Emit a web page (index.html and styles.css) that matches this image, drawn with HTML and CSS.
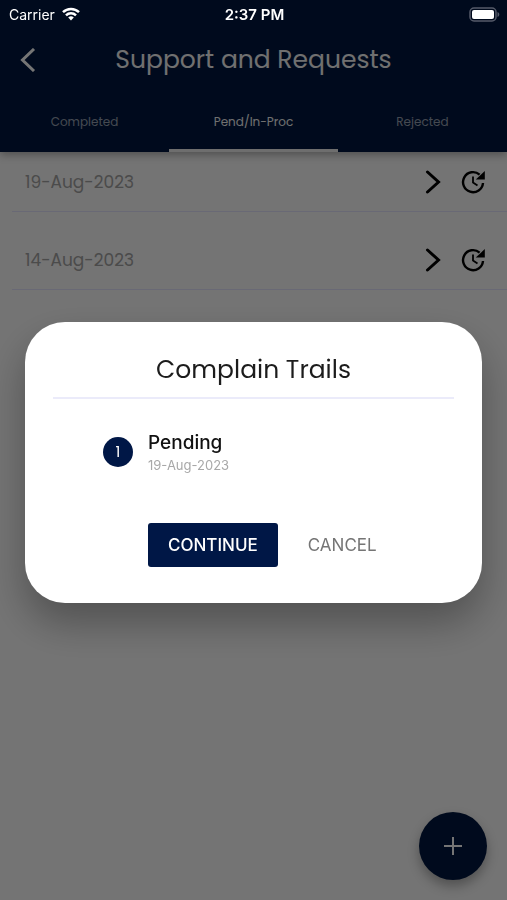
FILE: index.html
```html
<!DOCTYPE html>
<html lang="en">
<head>
    <meta charset="UTF-8">
    <meta name="viewport" content="width=device-width, initial-scale=1.0">
    <title>Support and Requests</title>
    <link rel="stylesheet" href="styles.css">
</head>
<body>
    <header class="app-header">
        <!-- Status bar -->
        <div class="status-bar">
            <div class="carrier">
                <span>Carrier</span>
                <svg width="18" height="14" viewBox="0 0 18 14" fill="none" stroke="#fff" stroke-width="2.5">
                    <path d="M1 5.2a11.4 11.4 0 0 1 16 0"/>
                    <path d="M4 8.4a7.1 7.1 0 0 1 10 0"/>
                    <path d="M9 13.4L6.2 10.6a4 4 0 0 1 5.6 0z" fill="#fff" stroke="none"/>
                </svg>
            </div>
            <span class="clock">2:37 PM</span>
            <svg class="battery" width="31" height="15" viewBox="0 0 31 15">
                <rect x="1" y="1" width="26" height="13" rx="4" fill="none" stroke="#555b6a" stroke-width="1.5"/>
                <rect x="3" y="3" width="22" height="9" rx="2" fill="#fff"/>
                <path d="M28.5 5c2.4 1 2.4 4 0 5z" fill="#555b6a"/>
            </svg>
        </div>

        <div class="title-bar">
            <button class="icon-button" aria-label="Back">
                <svg width="16" height="24" viewBox="0 0 16 24" fill="none" stroke="#fff" stroke-width="3">
                    <path d="M14 1L2.5 12L14 23"/>
                </svg>
            </button>
            <h1>Support and Requests</h1>
        </div>

        <nav class="tabs">
            <a href="#completed">Completed</a>
            <a href="#pending" class="active">Pend/In-Proc</a>
            <a href="#rejected">Rejected</a>
        </nav>
    </header>

    <!-- Requests -->
    <main class="request-list">
        <div class="request">
            <span class="request-date">19-Aug-2023</span>
            <button class="icon-button" aria-label="Open">
                <svg width="16" height="24" viewBox="0 0 16 24" fill="none" stroke="#000" stroke-width="3" stroke-linecap="round">
                    <path d="M2.5 2L13.5 12l-11 10"/>
                </svg>
            </button>
            <button class="icon-button" aria-label="Trails">
                <svg width="24" height="24" viewBox="0 0 24 24" fill="none" stroke="#000" stroke-width="2.4">
                    <path d="M22 13A10 10 0 1 1 18.6 4.6"/>
                    <path d="M12 6.5v6l4.5 3" stroke-width="1.8"/>
                    <path d="M23.8 1v8.6h-9z" fill="#000" stroke="none"/>
                </svg>
            </button>
        </div>
        <div class="request">
            <span class="request-date">14-Aug-2023</span>
            <button class="icon-button" aria-label="Open">
                <svg width="16" height="24" viewBox="0 0 16 24" fill="none" stroke="#000" stroke-width="3" stroke-linecap="round">
                    <path d="M2.5 2L13.5 12l-11 10"/>
                </svg>
            </button>
            <button class="icon-button" aria-label="Trails">
                <svg width="24" height="24" viewBox="0 0 24 24" fill="none" stroke="#000" stroke-width="2.4">
                    <path d="M22 13A10 10 0 1 1 18.6 4.6"/>
                    <path d="M12 6.5v6l4.5 3" stroke-width="1.8"/>
                    <path d="M23.8 1v8.6h-9z" fill="#000" stroke="none"/>
                </svg>
            </button>
        </div>
    </main>

    <button class="add-button" aria-label="Add request">
        <svg width="18" height="18" viewBox="0 0 18 18" stroke="#fff" stroke-width="2">
            <path d="M9 0v18M0 9h18"/>
        </svg>
    </button>

    <!-- Complain trails dialog -->
    <div class="overlay">
        <div class="dialog" role="dialog" aria-labelledby="dialog-title">
            <h2 id="dialog-title">Complain Trails</h2>
            <div class="step">
                <span class="step-number">1</span>
                <div class="step-info">
                    <p class="step-title">Pending</p>
                    <p class="step-date">19-Aug-2023</p>
                </div>
            </div>
            <div class="dialog-actions">
                <button class="continue-button">CONTINUE</button>
                <button class="cancel-button">CANCEL</button>
            </div>
        </div>
    </div>
</body>
</html>
```
FILE: styles.css
```css
/* Global Styles */
* {
    box-sizing: border-box;
}

body {
    margin: 0;
    min-height: 100vh;
    font-family: Poppins, Inter, sans-serif;
    background-color: #fcfcfc;
    color: #1c1c1c;
}

h1, h2, p {
    margin: 0;
    font-weight: 400;
}

svg {
    display: block;
}

button {
    padding: 0;
    border: none;
    background: none;
    font-family: Inter, sans-serif;
    cursor: pointer;
}

/* Header */
.app-header {
    background-color: #00173f;
    color: #f4f4f4;
    box-shadow: 0 3px 8px rgba(0, 0, 0, 0.3);
}

/* Stays bright above the overlay */
.status-bar {
    position: relative;
    z-index: 3;
    display: grid;
    grid-template-columns: 1fr auto 1fr;
    align-items: center;
    height: 28px;
    padding: 0 7px 0 9px;
    color: #fff;
    font-family: Inter, sans-serif;
    font-size: 14px;
}

.carrier {
    display: flex;
    align-items: center;
    gap: 7px;
}

.clock {
    font-size: 15px;
    font-weight: 600;
}

.battery {
    justify-self: end;
}

.title-bar {
    display: grid;
    grid-template-columns: 16px 1fr 16px;
    align-items: center;
    height: 64px;
    padding: 0 20px;
}

.title-bar h1 {
    font-size: 25px;
    text-align: center;
}

/* Tabs */
.tabs {
    display: flex;
    height: 60px;
}

.tabs a {
    flex: 1;
    display: flex;
    align-items: center;
    justify-content: center;
    border-top: 3px solid transparent;
    border-bottom: 3px solid transparent;
    color: rgba(255, 255, 255, 0.6);
    font-size: 12px;
    text-decoration: none;
}

.tabs a.active {
    border-bottom-color: #f0f0f0;
    color: #f4f4f4;
}

/* Requests */
.request-list {
    display: flex;
    flex-direction: column;
    gap: 18px;
    margin-left: 12px;
}

.request {
    display: flex;
    align-items: center;
    gap: 20px;
    height: 60px;
    padding: 0 22px 0 13px;
    border-bottom: 1px solid #e4e4ff;
}

.request-date {
    flex: 1;
    color: #a4a4a4;
    font-size: 17px;
}

.add-button {
    position: fixed;
    right: 20px;
    bottom: 20px;
    display: flex;
    align-items: center;
    justify-content: center;
    width: 68px;
    height: 68px;
    border-radius: 50%;
    background-color: #00173f;
    box-shadow: 0 6px 12px rgba(0, 0, 0, 0.3);
}

/* Dialog */
.overlay {
    position: fixed;
    inset: 0;
    z-index: 2;
    display: flex;
    align-items: center;
    padding: 50px 25px 25px;
    background-color: rgba(0, 0, 0, 0.54);
}

.dialog {
    flex: 1;
    padding: 28px 28px 36px;
    border-radius: 40px;
    background-color: #fff;
    box-shadow: 0 20px 40px rgba(0, 0, 0, 0.3);
}

.dialog h2 {
    padding-bottom: 7px;
    border-bottom: 2px solid #ebebfa;
    font-size: 25px;
    line-height: 40px;
    text-align: center;
}

.step {
    display: flex;
    align-items: center;
    gap: 15px;
    padding: 31px 0 0 50px;
}

.step-number {
    width: 30px;
    border-radius: 50%;
    background-color: #001746;
    color: #fff;
    font-size: 15px;
    line-height: 30px;
    text-align: center;
}

.step-title {
    color: #111;
    font-family: Inter, sans-serif;
    font-size: 19px;
    font-weight: 500;
    line-height: 26px;
}

.step-date {
    color: #a8a8a8;
    font-family: Inter, sans-serif;
    font-size: 13px;
    line-height: 18px;
}

.dialog-actions {
    display: flex;
    gap: 30px;
    padding: 49px 0 0 95px;
}

.continue-button {
    height: 44px;
    padding: 0 20px;
    border-radius: 3px;
    background-color: #001746;
    color: #fff;
    font-size: 17px;
    font-weight: 500;
}

.cancel-button {
    color: #757575;
    font-size: 17px;
}
```
